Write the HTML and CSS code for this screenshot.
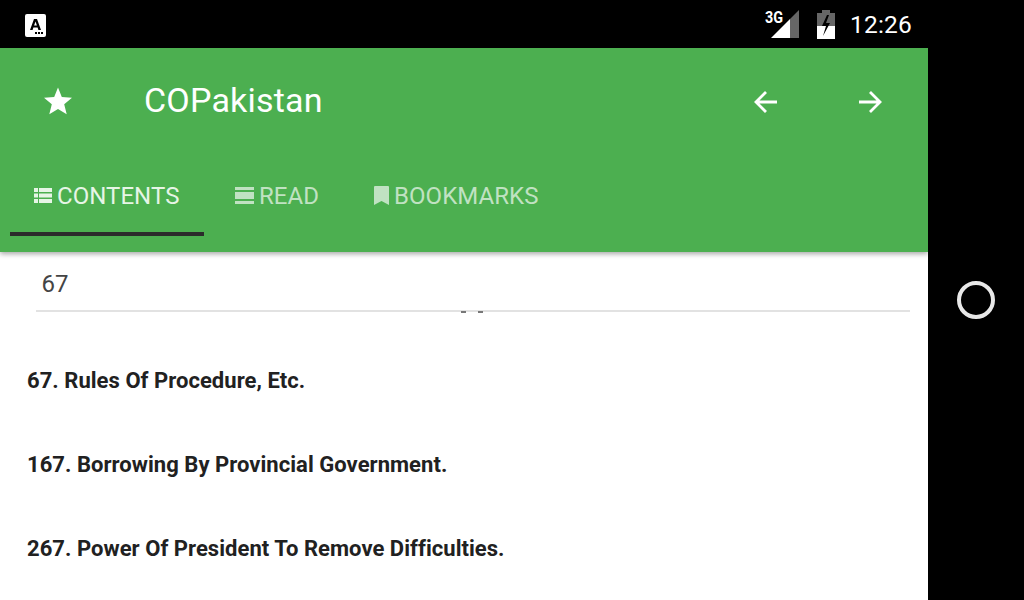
FILE: index.html
```html
<!DOCTYPE html>
<html>
<head>
<meta charset="utf-8">
<title>COPakistan</title>
<link rel="stylesheet" href="styles.css">
</head>
<body>
<div class="screen">
<div class="app">
  <div class="status">
    <svg class="notice" width="24" height="24" viewBox="0 0 24 24">
      <rect x="1" y="1" width="21" height="23" rx="2" fill="#fff"/>
      <path d="M6 17 10 6h3l4 11h-2.600l-.8-2.400H9.400L8.600 17zM10.100 12.600h2.800L11.500 8.500z" fill="#000"/>
      <rect x="11" y="19" width="2" height="2" fill="#000"/><rect x="14" y="19" width="2" height="2" fill="#000"/><rect x="17" y="19" width="2" height="2" fill="#000"/>
    </svg>
    <div class="status-right">
      <div class="signal">
        <span class="net">3G</span>
        <svg width="30" height="30" viewBox="0 0 30 30">
          <path d="M1 28 20 9v19z" fill="#fff"/>
          <path d="M20 9 29 0v28h-9z" fill="#666"/>
        </svg>
      </div>
      <svg class="battery" width="20" height="30" viewBox="0 0 20 30">
        <path d="M6 0h8v3h5v13H1V3h5z" fill="#666"/>
        <path d="M1 16h18v13H1z" fill="#fff"/>
        <path d="M11 5 6 16h4l-3 10 7-13h-4l3-8z" fill="#000"/>
      </svg>
      <span class="clock">12:26</span>
    </div>
  </div>
  <div class="appbar">
    <div class="toolbar">
      <svg class="star" width="30" height="30" viewBox="0 0 30 30"><path d="M15 1.500 18.800 11 29 11.700 21.200 18.300 23.700 28.300 15 22.900 6.300 28.300 8.800 18.300 1 11.700 11.200 11z" fill="#fff"/></svg>
      <div class="title">COPakistan</div>
      <svg class="arrow" width="26" height="26" viewBox="0 0 26 26"><path d="M24 13H3M13 3 3 13l10 10" fill="none" stroke="#fff" stroke-width="2.800"/></svg>
      <svg class="arrow arrow-next" width="26" height="26" viewBox="0 0 26 26"><path d="M2 13h21M13 3l10 10-10 10" fill="none" stroke="#fff" stroke-width="2.800"/></svg>
    </div>
    <div class="tabs">
      <div class="tab on">
        <svg width="18" height="16" viewBox="0 0 18 16"><path d="M0 0h4v4H0zM5 0h13v4H5zM0 5.500h4v4H0zM5 5.500h13v4H5zM0 11h4v4H0zM5 11h13v4H5z" fill="#e6f5e6"/></svg>
        CONTENTS
      </div>
      <div class="tab">
        <svg width="19" height="18" viewBox="0 0 19 18"><path d="M0 0h19v3H0zM0 5h19v7H0zM0 14h19v3H0z" fill="#c0e2c2"/></svg>
        READ
      </div>
      <div class="tab">
        <svg width="15" height="19" viewBox="0 0 15 19"><path d="M1 0h13a1 1 0 0 1 1 1v18l-7.500-4L0 19V1a1 1 0 0 1 1-1z" fill="#c0e2c2"/></svg>
        BOOKMARKS
      </div>
    </div>
  </div>
  <div class="content">
    <div class="search">
      <div class="query">67</div>
      <div class="peek"><span></span><span></span></div>
    </div>
    <div class="result">67. Rules Of Procedure, Etc.</div>
    <div class="result">167. Borrowing By Provincial Government.</div>
    <div class="result">267. Power Of President To Remove Difficulties.</div>
  </div>
</div>
<div class="navbar"><div class="home"></div></div>
</div>
</body>
</html>
```
FILE: styles.css
```css
html,body{margin:0;padding:0;background:#000;overflow:hidden}
body{font-family:Roboto,"Liberation Sans",sans-serif}
.screen{display:flex;width:1024px;height:600px}
.app{width:928px;height:600px;display:flex;flex-direction:column;background:#fff}
.navbar{width:96px;display:flex;align-items:center;justify-content:center;background:#000}
.home{width:30px;height:30px;border:4px solid #e8e8e8;border-radius:50%;box-sizing:content-box}

.status{height:48px;background:#000;display:flex;align-items:center;justify-content:space-between;padding-left:24px;padding-right:16px;color:#fff}
.notice{display:block;margin-top:1px}
.status-right{display:flex;align-items:center;padding-top:2px}
.signal{position:relative;width:36px;height:30px;margin-right:16px}
.signal svg{position:absolute;right:0;top:0;display:block}
.net{position:absolute;left:1px;top:1px;font-size:16px;font-weight:700;line-height:14px;transform:scaleX(.9);transform-origin:left top}
.battery{display:block;margin-right:14px}
.clock{font-size:24.500px;line-height:30px;letter-spacing:.2px}

.appbar{height:204px;background:#4caf50;position:relative;z-index:1;box-shadow:0 2px 5px rgba(0,0,0,.35);display:flex;flex-direction:column;color:#fff}
.toolbar{height:106px;display:flex;align-items:center;padding-left:43px;padding-right:45px}
.star{display:block}
.title{flex:1;margin-left:71px;margin-bottom:2px;font-size:34px;letter-spacing:.2px}
.arrow{display:block;margin-top:1px}
.arrow-next{margin-left:78px}

.tabs{display:flex;padding-left:10px}
.tab{height:82px;box-sizing:border-box;display:flex;align-items:center;gap:5px;padding:1px 24px 0;margin-right:7px;font-size:24px;letter-spacing:.05px;color:#c0e2c2}
.tab.on{color:#e6f5e6;border-bottom:4px solid #2b2b2b;width:194px;padding-top:5px}

.content{flex:1;overflow:hidden}
.search{margin-left:36px;margin-right:18px;height:58px;border-bottom:2px solid #e2e2e2;position:relative}
.query{padding-left:5.500px;padding-top:16px;font-size:24px;line-height:32px;color:#444}
.peek{position:absolute;left:425px;top:59px;width:22px;height:2px;display:flex;justify-content:space-between}
.peek span{width:5px;height:2px;background:#777}
.result{height:84px;font-size:22px;letter-spacing:.04px;font-weight:700;color:#212121;padding-left:27px;line-height:28px}
.search + .result{margin-top:55px}
```
